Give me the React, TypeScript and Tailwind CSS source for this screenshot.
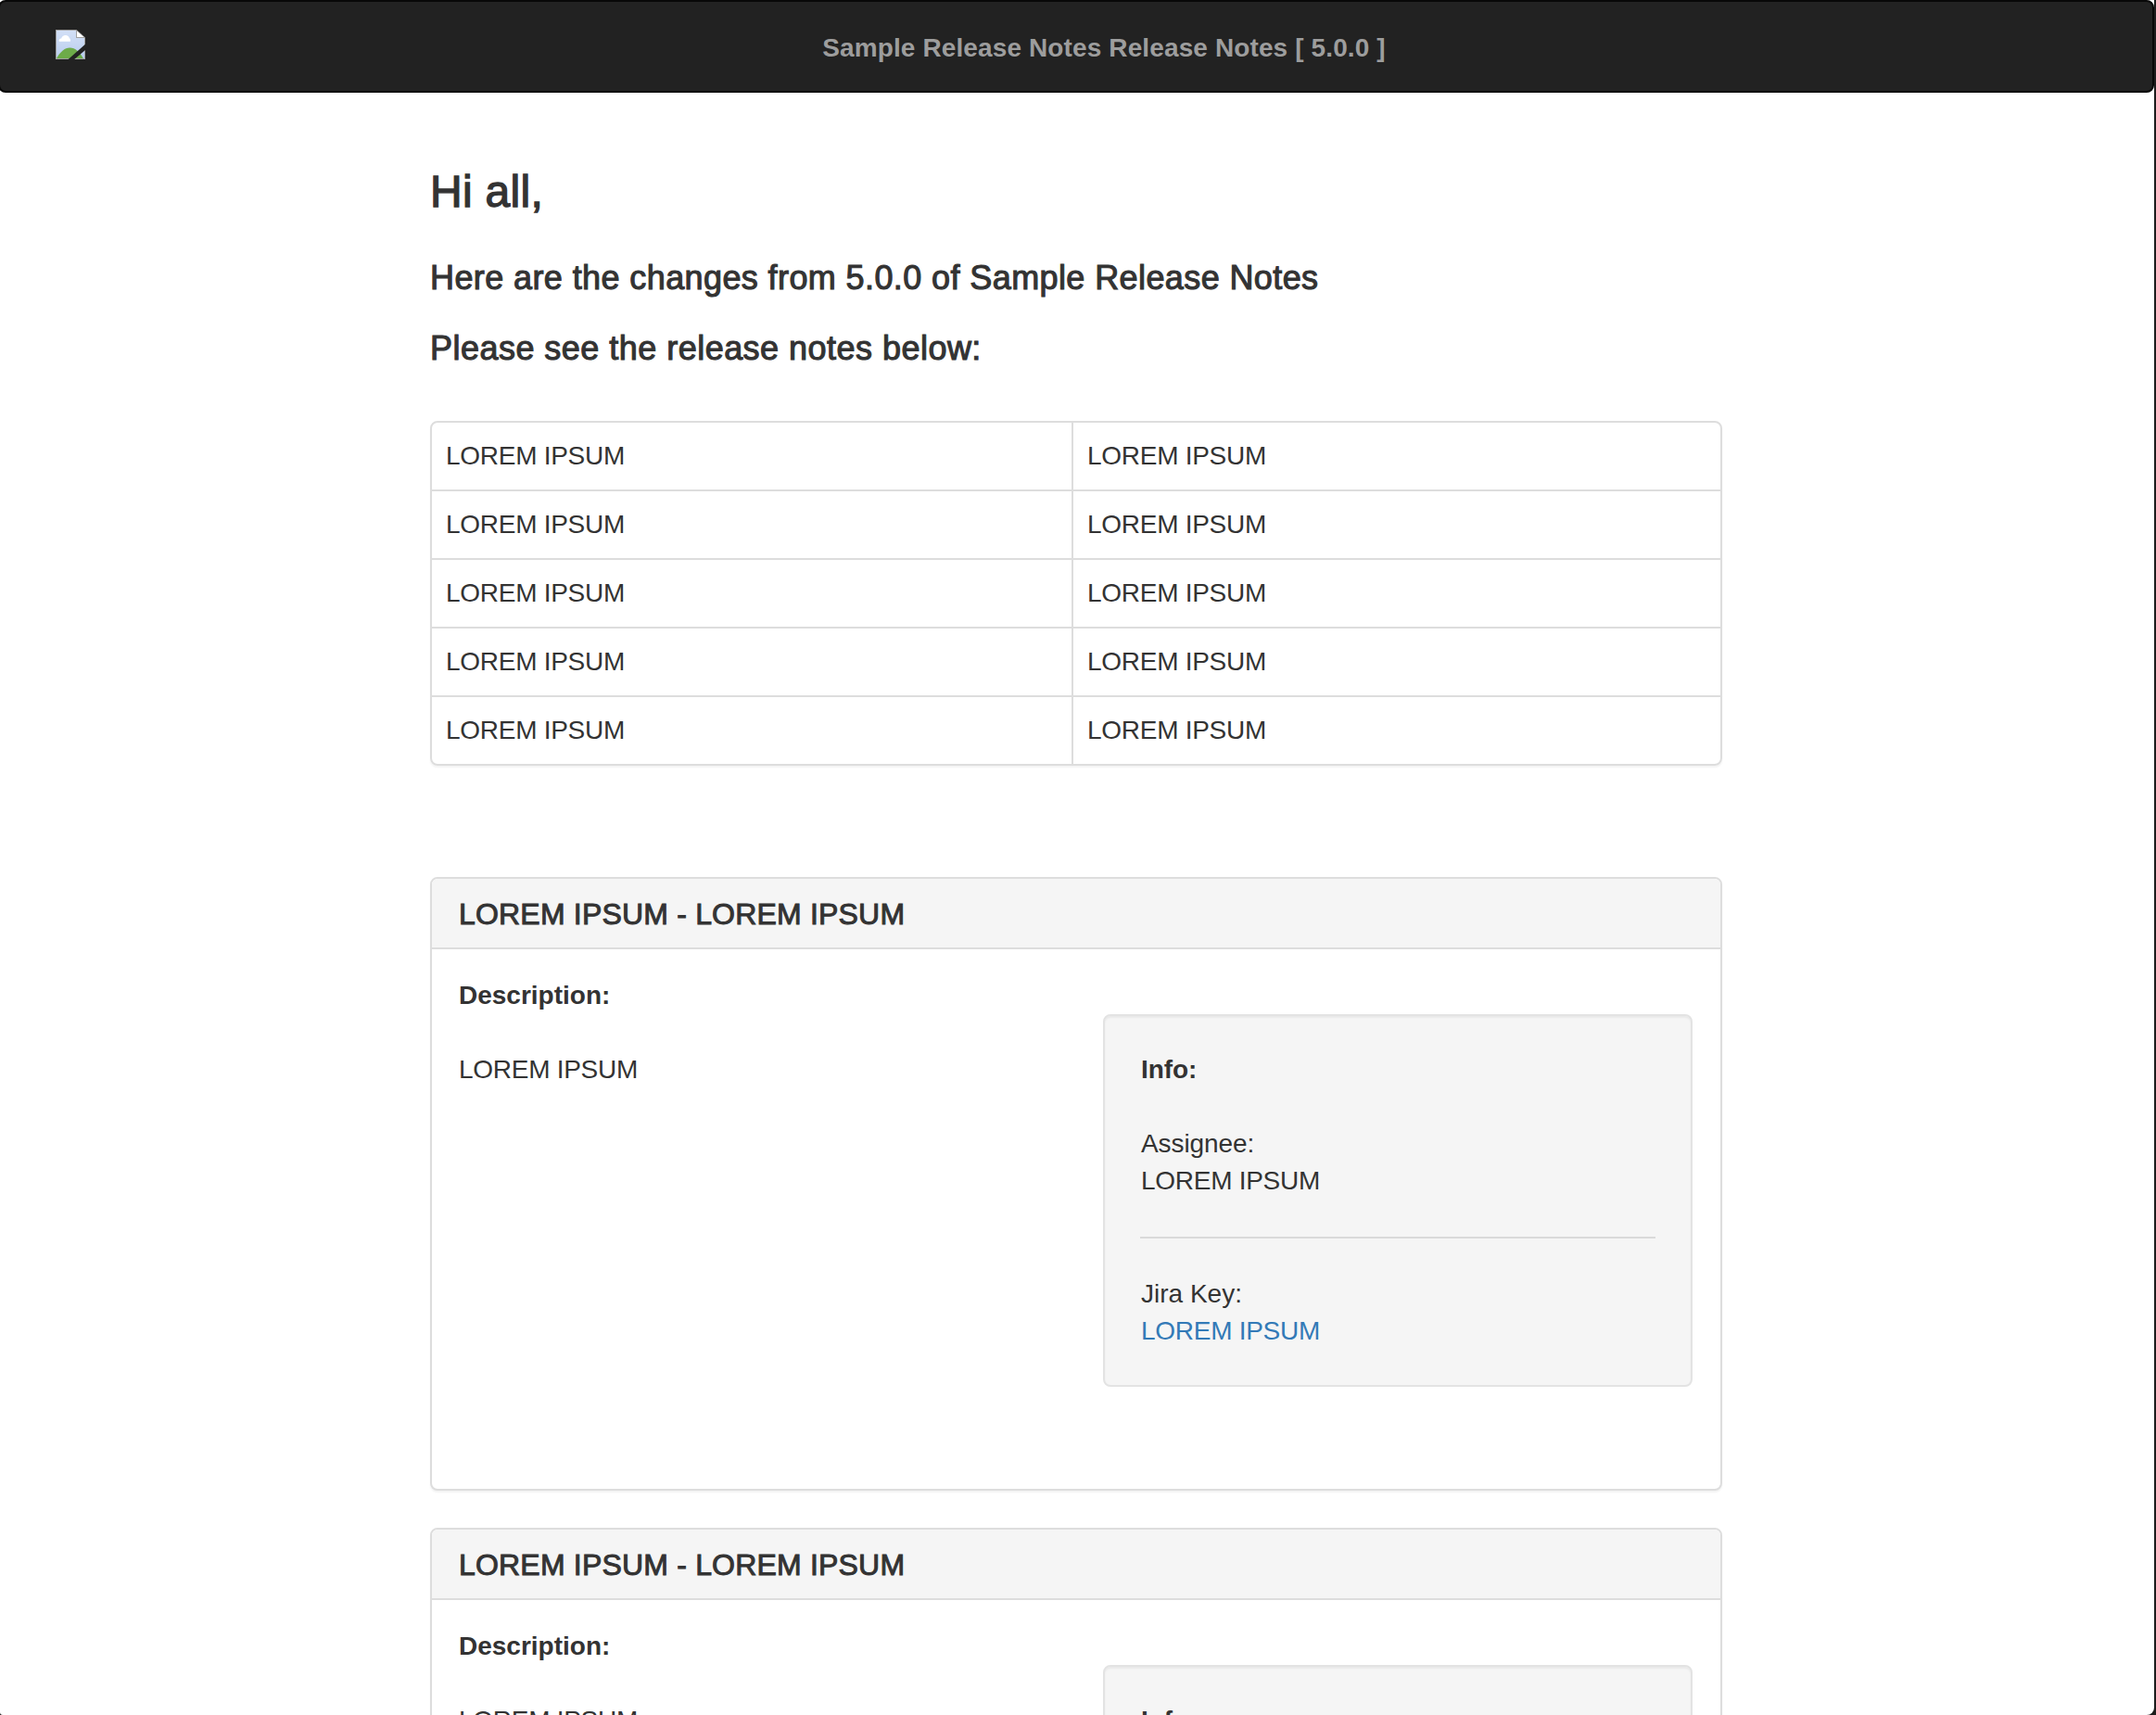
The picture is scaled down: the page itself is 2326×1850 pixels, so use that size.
import React from "react";

function BrokenImage() {
  return (
    <svg width="32" height="32" viewBox="0 0 32 32" className="block" aria-hidden="true">
      <defs>
        <linearGradient id="sky" x1="0" y1="0" x2="0" y2="1">
          <stop offset="0" stopColor="#d3e0f7" />
          <stop offset="1" stopColor="#b9cdee" />
        </linearGradient>
      </defs>
      <path d="M0 0H22.5L32 8.5V32H0Z" fill="#a0a0a0" />
      <path d="M1 1H22V9H31V31H1Z" fill="url(#sky)" />
      <path d="M23 1.5L30.5 8H23Z" fill="#fff" />
      <path d="M4 12.8C3 11.5 4.2 9.6 6.2 9.6C6.6 7.4 8.6 6 10.6 6C13 6 14.4 7.4 14.8 9C16 9.6 16.4 11.6 15.8 12.8Z" fill="#fff" />
      <path d="M1 31C4.8 24.4 9.6 19.6 15.4 19.6C21.2 19.6 26 24.4 29.8 31Z" fill="#6dab49" />
      <path d="M0 31H32V32H0Z" fill="#a0a0a0" />
      <path d="M13.6 32L32 15.8V22L20.2 32Z" fill="#222" />
    </svg>
  );
}

function Lorem() {
  return <span className="tracking-[-0.28px]">LOREM IPSUM</span>;
}

function Panel() {
  return (
    <section className="h-[662px] shrink-0 rounded-lg border-2 border-[#ddd] bg-white shadow-[0_2px_2px_rgba(0,0,0,0.05)]">
      <div className="h-[76px] rounded-t-md border-b-2 border-[#ddd] bg-[#f5f5f5] px-[29px] pt-[20px]">
        <h4 className="text-[32px] leading-[36px] tracking-[0.19px] [-webkit-text-stroke:1px_#333]">
          LOREM IPSUM - LOREM IPSUM
        </h4>
      </div>
      <div className="flex justify-between pr-[30px] pl-[29px] pt-[30px]">
        <div>
          <p className="font-bold">Description:</p>
          <p className="mt-10">
            <Lorem />
          </p>
        </div>
        <aside className="mt-10 h-[402px] w-[636px] rounded-lg border-2 border-[#e3e3e3] bg-[#f5f5f5] px-[38px] py-[38px] shadow-[inset_0_2px_2px_rgba(0,0,0,0.05)]">
          <div className="pl-px">
            <p className="font-bold tracking-[-0.1px]">Info:</p>
            <p className="mt-10 tracking-[-0.1px]">Assignee:</p>
            <p>
              <Lorem />
            </p>
          </div>
          <hr className="mt-10 mb-10 border-t-2 border-[#dadada]" />
          <div className="pl-px">
            <p>Jira Key:</p>
            <a className="block text-[#337ab7]">
              <Lorem />
            </a>
          </div>
        </aside>
      </div>
    </section>
  );
}

export default function App() {
  const rows = [0, 1, 2, 3, 4];
  return (
    <div className="h-[1850px] w-[2326px] overflow-hidden bg-[#1c1c1c] pr-[2px] font-['Liberation_Sans',Arial,sans-serif] text-[28px] leading-[40px] text-[#333]">
      <div className="h-full overflow-hidden rounded-br-[8px] rounded-bl-[3px] bg-white">
        <nav className="-ml-[2px] grid h-[100px] grid-cols-[1fr_auto_1fr] items-start rounded-lg border-2 border-[#080808] bg-[#222] pr-[2px]">
          <div className="pt-[30px] pl-[60px]">
            <BrokenImage />
          </div>
          <p className="ml-[62px] pt-[30px] font-bold tracking-[0.12px] whitespace-nowrap text-[#9d9d9d]">
            Sample Release Notes Release Notes [ 5.0.0 ]
          </p>
        </nav>
        <main className="ml-[464px] flex w-[1394px] flex-col pt-[81px]">
          <h2 className="text-[48px] leading-[52px] tracking-[0.3px] [-webkit-text-stroke:1.3px_#333]">Hi all,</h2>
          <h3 className="mt-[47px] text-[36px] leading-[40px] tracking-[0.4px] [-webkit-text-stroke:1.1px_#333]">
            Here are the changes from 5.0.0 of Sample Release Notes
          </h3>
          <h3 className="mt-[36px] text-[36px] leading-[40px] tracking-[0.47px] [-webkit-text-stroke:1.1px_#333]">
            Please see the release notes below:
          </h3>
          <div className="mt-[58px] mb-[120px] divide-y-2 divide-[#ddd] rounded-lg border-2 border-[#ddd] shadow-[0_2px_2px_rgba(0,0,0,0.05)]">
            {rows.map((r) => (
              <div key={r} className={r === 4 ? "flex h-[72px]" : "flex h-[74px]"}>
                <div className="w-[692px] border-r-2 border-[#ddd] py-4 pl-[15px]">
                  <Lorem />
                </div>
                <div className="py-4 pl-[15px]">
                  <Lorem />
                </div>
              </div>
            ))}
          </div>
          <div className="flex flex-col gap-10">
            <Panel />
            <Panel />
          </div>
        </main>
      </div>
    </div>
  );
}
